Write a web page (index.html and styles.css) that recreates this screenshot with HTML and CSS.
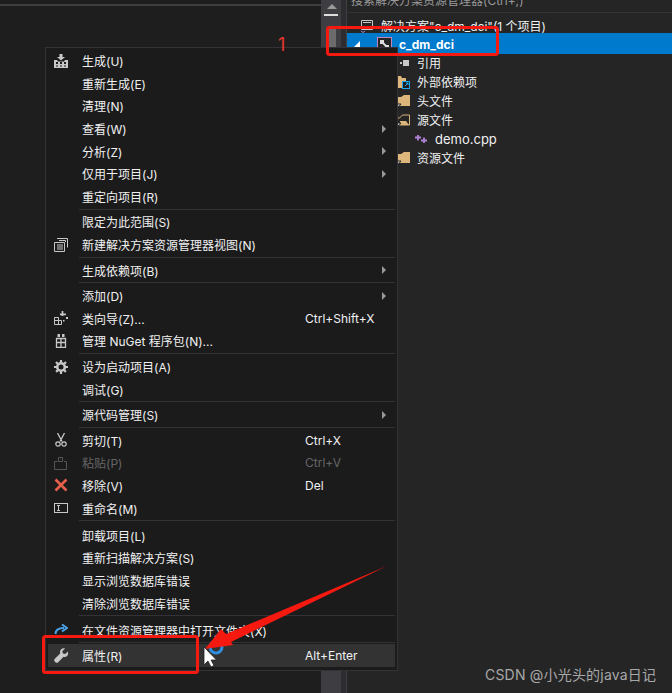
FILE: index.html
```html
<!DOCTYPE html>
<html lang="zh">
<head>
<meta charset="utf-8">
<title>Solution Explorer context menu</title>
<link rel="stylesheet" href="styles.css">
</head>
<body>
<div class="app">
  <div class="editor"><div class="editor-rule"></div></div>
  <div class="vscroll">
    <svg class="vscroll-up" width="20" height="10" viewBox="0 0 20 10"><path d="M6 8l5-5 5 5z" fill="#999"/></svg>
    <div class="vscroll-mark"></div>
    <div class="vscroll-thumb"></div>
  </div>
  <div class="gutter"></div>
  <div class="panel">
    <div class="search">搜索解决方案资源管理器(Ctrl+;)</div>
    <div class="tree">
      <div class="node node-solution">
        <svg class="ticon" width="14" height="14" viewBox="0 0 14 14"><path d="M1.500 1.500h11v9h-11z" fill="none" stroke="#c8c8c8"/><path d="M3 3.500h8" stroke="#c8c8c8"/><path d="M1 12l2 1.500 2-1.500" fill="none" stroke="#b180d7"/></svg>
        <span>解决方案"c_dm_dci"(1 个项目)</span>
      </div>
      <div class="node node-project">
        <svg class="twist" width="8" height="8" viewBox="0 0 8 8"><path d="M7 1v6H1z" fill="#fff"/></svg>
        <svg class="ticon" width="15" height="15" viewBox="0 0 15 15"><rect x=".5" y=".5" width="14" height="14" fill="#252526" stroke="#c586c0"/><path d="M3 3h4v4H3zM8 8h4v4H8z" fill="#ddd"/><path d="M6 6l4 4" stroke="#ddd" stroke-width="2"/></svg>
        <span>c_dm_dci</span>
      </div>
      <div class="node node-item">
        <svg class="ticon" width="14" height="14" viewBox="0 0 14 14"><path d="M0 6h2v2H0zM4 6h2v2H4zM7 4h6v6H7z" fill="#c8c8c8"/></svg>
        <span>引用</span>
      </div>
      <div class="node node-item">
        <svg class="ticon" width="14" height="14" viewBox="0 0 14 14"><path d="M0 1h5l1 2h4v3H6v7H0z" fill="#dcb67a"/><rect x="6.500" y="6.500" width="7" height="7" fill="#1e1e1e" stroke="#1ea7f0"/><path d="M9 11l3-3M10 8h2v2" fill="none" stroke="#1ea7f0"/></svg>
        <span>外部依赖项</span>
      </div>
      <div class="node node-item">
        <svg class="ticon" width="14" height="14" viewBox="0 0 14 14"><path d="M1 3h4l3-2h6v11H1z" fill="#dcb67a"/><path d="M0 10h5l-2.500 3z" fill="#c8c8c8" stroke="#252526"/></svg>
        <span>头文件</span>
      </div>
      <div class="node node-item">
        <svg class="ticon" width="14" height="14" viewBox="0 0 14 14"><path d="M.5 5h3l3-3h7v10H.500z" fill="none" stroke="#dcb67a"/><path d="M4 8h6l3 4H4z" fill="#dcb67a"/><path d="M0 10h5l-2.500 3z" fill="#c8c8c8" stroke="#252526"/></svg>
        <span>源文件</span>
      </div>
      <div class="node node-file">
        <svg class="ticon" width="12" height="8" viewBox="0 0 12 8"><path d="M0 2.500h6M3 0v5.500M6 5.500h6M9 2.500V8" stroke="#b180d7" stroke-width="1.800"/></svg>
        <span>demo.cpp</span>
      </div>
      <div class="node node-item">
        <svg class="ticon" width="14" height="14" viewBox="0 0 14 14"><path d="M1 3h4l3-2h6v11H1z" fill="#dcb67a"/><path d="M0 10h5l-2.500 3z" fill="#c8c8c8" stroke="#252526"/></svg>
        <span>资源文件</span>
      </div>
    </div>
  </div>
</div>

<div class="menu">
  <div class="mrow"><span class="mico"><svg width="14" height="14" viewBox="0 0 14 14"><path d="M5.500 0h3v3H11L7 6.500 3 3h2.500z" fill="#c8c8c8"/><path d="M0 6h3l1 1.500h6L11 6h3v8H0z" fill="#c8c8c8"/><path d="M2 8h2v2H2zM6 8h2v2H6zM10 8h2v2h-2zM2 11.500h2v1H2zM6 11.500h2v1H6zM10 11.500h2v1h-2z" fill="#1b1b1c"/></svg></span><span class="mtxt">生成(U)</span></div>
  <div class="mrow"><span class="mico"></span><span class="mtxt">重新生成(E)</span></div>
  <div class="mrow"><span class="mico"></span><span class="mtxt">清理(N)</span></div>
  <div class="mrow"><span class="mico"></span><span class="mtxt">查看(W)</span><i class="marr"></i></div>
  <div class="mrow"><span class="mico"></span><span class="mtxt">分析(Z)</span><i class="marr"></i></div>
  <div class="mrow"><span class="mico"></span><span class="mtxt">仅用于项目(J)</span><i class="marr"></i></div>
  <div class="mrow"><span class="mico"></span><span class="mtxt">重定向项目(R)</span></div>
  <div class="msep"></div>
  <div class="mrow"><span class="mico"></span><span class="mtxt">限定为此范围(S)</span></div>
  <div class="mrow"><span class="mico"><svg width="14" height="14" viewBox="0 0 14 14"><path d="M.5 4.500h10v9H.500z" fill="none" stroke="#c8c8c8"/><path d="M3 .5h10.500v9" fill="none" stroke="#c8c8c8"/><path d="M3 7h6M3 9h6M3 11h6" stroke="#c8c8c8"/><path d="M5 2.500h6.500V4" fill="none" stroke="#c8c8c8"/></svg></span><span class="mtxt">新建解决方案资源管理器视图(N)</span></div>
  <div class="msep"></div>
  <div class="mrow"><span class="mico"></span><span class="mtxt">生成依赖项(B)</span><i class="marr"></i></div>
  <div class="msep"></div>
  <div class="mrow"><span class="mico"></span><span class="mtxt">添加(D)</span><i class="marr"></i></div>
  <div class="mrow"><span class="mico"><svg width="14" height="14" viewBox="0 0 14 14"><path d="M.5 6.500h4v3h3v4h-7z" fill="none" stroke="#c8c8c8"/><path d="M.5 9.500h4v4" fill="none" stroke="#c8c8c8"/><path d="M9 0h2v3h3v2h-3v1H9V5H7V3h2z" fill="#c8c8c8" transform="scale(.85)"/><path d="M12 6h2v2h-2zM9 9h1.500v1.500H9z" fill="#c8c8c8"/></svg></span><span class="mtxt">类向导(Z)...</span><span class="mkey">Ctrl+Shift+X</span></div>
  <div class="mrow"><span class="mico"><svg width="14" height="14" viewBox="0 0 14 14"><path d="M2.500 4.500h9v9h-9zM7 4.500v9M2.500 8.500h9" fill="none" stroke="#c8c8c8" stroke-width="1.300"/><path d="M3.500 0h2.500v3H3.500zM8 0h2.500v3H8z" fill="#c8c8c8"/></svg></span><span class="mtxt">管理 NuGet 程序包(N)...</span></div>
  <div class="msep"></div>
  <div class="mrow"><span class="mico"><svg width="14" height="14" viewBox="0 0 14 14"><circle cx="7" cy="7" r="3.800" fill="none" stroke="#c8c8c8" stroke-width="2.600"/><path d="M7 0v14M0 7h14M2 2l10 10M12 2L2 12" stroke="#c8c8c8" stroke-width="2.200" stroke-dasharray="2.400 9.200"/></svg></span><span class="mtxt">设为启动项目(A)</span></div>
  <div class="mrow"><span class="mico"></span><span class="mtxt">调试(G)</span></div>
  <div class="msep"></div>
  <div class="mrow"><span class="mico"></span><span class="mtxt">源代码管理(S)</span><i class="marr"></i></div>
  <div class="msep"></div>
  <div class="mrow"><span class="mico"><svg width="14" height="14" viewBox="0 0 14 14"><path d="M3.500 0L8 8.500M10.500 0L6 8.500" fill="none" stroke="#c8c8c8" stroke-width="1.300"/><circle cx="4" cy="11" r="2.200" fill="none" stroke="#c8c8c8" stroke-width="1.200"/><circle cx="10" cy="11" r="2.200" fill="none" stroke="#c8c8c8" stroke-width="1.200"/></svg></span><span class="mtxt">剪切(T)</span><span class="mkey">Ctrl+X</span></div>
  <div class="mrow mrow-off"><span class="mico"><svg width="14" height="14" viewBox="0 0 14 14"><path d="M.5 5.500h3M10 5.500h2.500v8H.500v-8" fill="none" stroke="#555"/><path d="M4.500 1.500h4v4h-4z" fill="none" stroke="#555"/></svg></span><span class="mtxt">粘贴(P)</span><span class="mkey">Ctrl+V</span></div>
  <div class="mrow"><span class="mico"><svg width="14" height="14" viewBox="0 0 14 14"><path d="M1.500 1.500l11 11M12.500 1.500l-11 11" stroke="#e8604c" stroke-width="2.600"/></svg></span><span class="mtxt">移除(V)</span><span class="mkey">Del</span></div>
  <div class="mrow"><span class="mico"><svg width="14" height="10" viewBox="0 0 14 10"><rect x=".5" y=".5" width="13" height="9" fill="none" stroke="#c8c8c8"/><path d="M3 2.500h3M3 7.500h3M4.500 2.500v5" stroke="#c8c8c8"/></svg></span><span class="mtxt">重命名(M)</span></div>
  <div class="msep msep-wide"></div>
  <div class="mrow"><span class="mico"></span><span class="mtxt">卸载项目(L)</span></div>
  <div class="mrow"><span class="mico"></span><span class="mtxt">重新扫描解决方案(S)</span></div>
  <div class="mrow"><span class="mico"></span><span class="mtxt">显示浏览数据库错误</span></div>
  <div class="mrow"><span class="mico"></span><span class="mtxt">清除浏览数据库错误</span></div>
  <div class="msep msep-wide"></div>
  <div class="mrow"><span class="mico"><svg width="14" height="12" viewBox="0 0 14 12"><path d="M1.500 10C1.500 5.500 5 4 10 4" fill="none" stroke="#4aa3e8" stroke-width="2"/><path d="M8 .5l5 3.500-5 3.500" fill="none" stroke="#4aa3e8" stroke-width="2"/></svg></span><span class="mtxt">在文件资源管理器中打开文件夹(X)</span></div>
  <div class="msep"></div>
  <div class="mrow mrow-hot"><span class="mico"><svg width="15" height="15" viewBox="0 0 15 15"><path d="M14 3.500l-2.800 2.600-2.300-.6-.6-2.300L11 .5C8.500-.2 6 1.500 6 4c0 .6.100 1 .2 1.400L.8 10.800c-.8.800-.8 2 0 2.800l.6.600c.8.800 2 .8 2.800 0L9.600 8.800c2.500.9 5.200-1.200 4.400-5.300z" fill="#c8c8c8"/></svg></span><span class="mtxt">属性(R)</span><span class="mkey">Alt+Enter</span></div>
</div>

<svg class="marks" width="672" height="693" viewBox="0 0 672 693">
  <rect x="327.500" y="27.500" width="170" height="27" rx="2" fill="none" stroke="#f5190f" stroke-width="3"/>
  <rect x="43.500" y="636.500" width="154" height="36" rx="2" fill="none" stroke="#f5190f" stroke-width="3"/>
  <circle cx="216" cy="647" r="6" fill="none" stroke="#2f8fe0" stroke-width="3"/>
  <path d="M387 566L226 634 221 629 205 649 233 645 231 642z" fill="#f5190f"/>
  <path d="M204 647v18l4-4 3 6 3-1.500-3-5.500h5.500z" fill="#fff" stroke="#222" stroke-width=".8"/>
</svg>
<div class="mark-num">1</div>
<div class="watermark">CSDN @小光头的java日记</div>
</body>
</html>
```
FILE: styles.css
```css
* { box-sizing: border-box; }
html, body { margin: 0; padding: 0; }
body {
  width: 672px;
  height: 693px;
  overflow: hidden;
  position: relative;
  background: #252526;
  color: #f1f1f1;
  font-family: Inter, "Noto Sans CJK SC", sans-serif;
  font-size: 12px;
}
.app { display: flex; height: 693px; }
.editor { width: 321px; background: #1e1e1e; padding-top: 4px; }
.editor-rule { height: 2px; background: #3f3f3f; }
.vscroll { width: 20px; background: #3e3e42; position: relative; }
.vscroll-up { display: block; margin-top: 1px; }
.vscroll-mark { height: 2px; width: 14px; margin: 3px 0 0 3px; background: #ddd; }
.vscroll-thumb { width: 9px; height: 640px; margin: 11px 0 0 6px; background: #6b6b6b; }
.gutter { width: 6px; background: #2d2d30; border-right: 1px solid #3f3f46; }
.panel { flex: 1; min-width: 0; }
.search { height: 13px; padding: 0 0 0 4px; line-height: 2px; color: #999; white-space: nowrap; overflow: hidden; border-bottom: 1px solid #333337; font-size: 12px; }
.tree { padding-top: 3px; }
.node { display: flex; align-items: center; height: 19px; white-space: nowrap; color: #f1f1f1; }
.ticon { flex: none; display: block; }
.node-solution { height: 17px; padding-left: 13px; gap: 7px; padding-top: 2px; }
.node-project { height: 21px; margin-bottom: -1px; background: #007acc; color: #fff; padding: 1px 0 0 6px; font-weight: 700; position: relative; }
.node-project .twist { margin-right: 16px; }
.node-project .ticon { margin-right: 7px; }
.node-item { padding-left: 49px; gap: 7px; }
.node-file { padding-left: 68px; gap: 8px; font-size: 13px; }

.menu {
  position: absolute;
  left: 45px;
  top: 47px;
  width: 353px;
  height: 624px;
  background: #1b1b1c;
  border: 1px solid #333337;
  padding: 1.500px 2px 2px;
}
.mrow { display: flex; align-items: center; height: 22.600px; position: relative; white-space: nowrap; }
.mico { width: 34px; flex: none; padding-left: 6px; display: flex; align-items: center; }
.mico svg { display: block; }
.mtxt { flex: none; }
.mkey { position: absolute; left: 257px; }
.marr { position: absolute; left: 334px; width: 0; height: 0; border-left: 4px solid #999; border-top: 4px solid transparent; border-bottom: 4px solid transparent; }
.mrow-off { color: #656565; }
.mrow-hot { background: #333334; }
.msep { height: 1px; margin: 1px 0 1px 31px; width: 316px; background: #333337; }
.msep-wide { margin-bottom: 2.550px; }

.marks { position: absolute; left: 0; top: 0; pointer-events: none; }
.mark-num { position: absolute; left: 278px; top: 33px; color: #e8392e; font-size: 18px; line-height: 24px; }
.watermark { position: absolute; left: 485px; top: 665px; font-size: 14px; line-height: 20px; letter-spacing: .2px; color: #a8a8a8; white-space: nowrap; }
```
